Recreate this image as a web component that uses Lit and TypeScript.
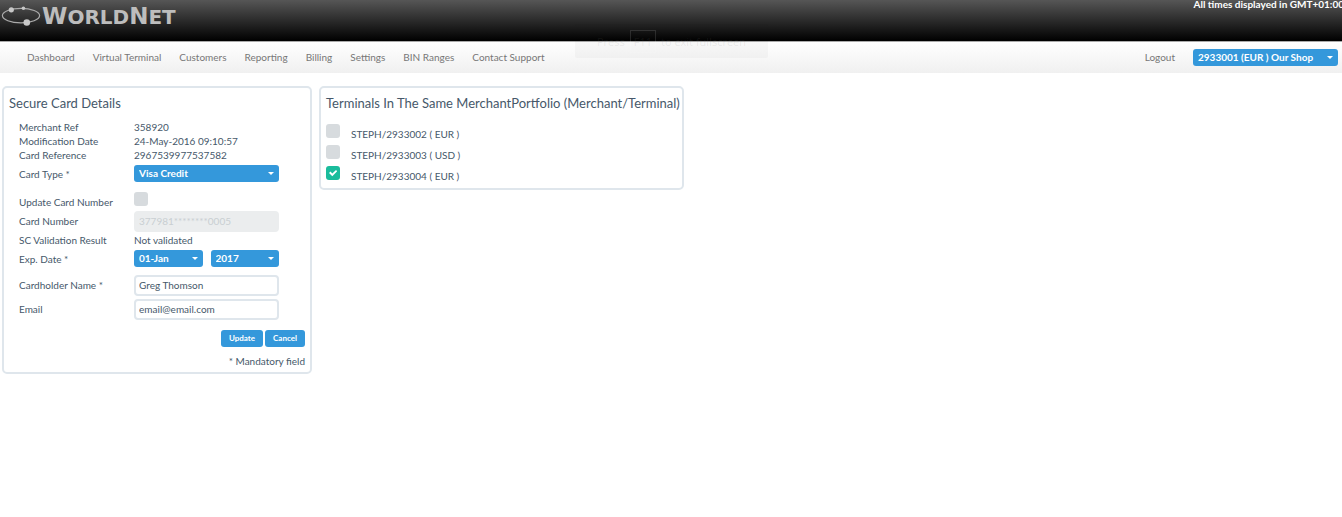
import { LitElement, html, css } from "lit";
import { customElement } from "lit/decorators.js";

const NAV = ["Dashboard", "Virtual Terminal", "Customers", "Reporting", "Billing", "Settings", "BIN Ranges", "Contact Support"];

const TERMINALS = [
  { id: "t2933002", label: "STEPH/2933002 ( EUR )", on: false },
  { id: "t2933003", label: "STEPH/2933003 ( USD )", on: false },
  { id: "t2933004", label: "STEPH/2933004 ( EUR )", on: true },
];

@customElement("app-root")
export class AppRoot extends LitElement {
  static styles = css`
    :host {
      display: block;
      position: relative;
      min-height: 100vh;
      overflow: hidden;
      background: #fff;
      color: #46586a;
      font: 10px/14px Lato, "Open Sans", sans-serif;
    }
    * { box-sizing: border-box; }
    .top {
      display: flex;
      justify-content: space-between;
      align-items: flex-start;
      height: 41px;
      background: linear-gradient(#565656, #000);
    }
    .brand { display: flex; align-items: center; height: 32px; color: #bdbdbd; }
    .orbit { width: 42px; height: 24px; flex: none; }
    .word { font: bold 20px/24px "DejaVu Sans", sans-serif; }
    .cap { font-size: 23px; }
    .zone { margin-right: -2px; line-height: 8px; font-weight: bold; color: #fff; white-space: nowrap; }
    .nav {
      display: flex;
      align-items: center;
      gap: 18px;
      height: 32px;
      padding: 0 4px 1px 27px;
      border-top: 1px solid #aaa;
      background: linear-gradient(#fff, #f0f0f0);
    }
    .nav a { color: #777; text-decoration: none; white-space: nowrap; }
    .logout { margin-left: auto; }
    .main { display: flex; align-items: flex-start; gap: 7px; padding: 13px 2px; }
    .card { border: 2px solid #dfe6ec; border-radius: 5px; }
    .details { width: 310px; padding: 7px 5px 4px; }
    .terminals { padding: 7px 2px 5px 5px; }
    h2 { margin: 0; font-size: 13px; line-height: 16px; font-weight: normal; white-space: nowrap; }
    .fields {
      display: grid;
      grid-template-columns: 115px 145px;
      padding: 9px 0 0 10px;
      align-items: center;
    }
    .cell { display: flex; align-items: center; gap: 8px; }
    .h20 { height: 20px; }
    .h24 { height: 24px; }
    .h28 { height: 28px; }
    .low { align-self: end; }
    .pick { align-items: flex-start; padding-top: 3px; }
    .check { height: 23px; align-items: flex-end; padding-bottom: 3px; }
    .select { position: relative; display: block; flex: 1; }
    .select::after {
      content: "";
      position: absolute;
      right: 5px;
      top: 7px;
      border: 3px solid transparent;
      border-top-color: #fff;
      border-bottom-width: 0;
      pointer-events: none;
    }
    select {
      appearance: none;
      display: block;
      width: 100%;
      height: 17px;
      padding: 0 16px 0 5px;
      border: 0;
      border-radius: 3px;
      background: #3498db;
      color: #fff;
      font: bold 10px/17px Lato, sans-serif;
    }
    .shop { flex: none; width: 145px; }
    .text {
      width: 100%;
      height: 21px;
      padding: 0 3px;
      border: 2px solid #dfe6ec;
      border-radius: 4px;
      background: #fff;
      color: #46586a;
      font: 10px/16px Lato, sans-serif;
    }
    .text:disabled { border-color: #ebedee; background: #ebedee; color: #c9cfd2; }
    .box {
      appearance: none;
      flex: none;
      width: 14px;
      height: 14px;
      margin: 0;
      border-radius: 3px;
      background: #d7dbde;
    }
    .box:checked { background: #1abc9c; }
    .box:checked::before {
      content: "";
      display: block;
      width: 14px;
      height: 14px;
      background: #fff;
      clip-path: polygon(3px 7px, 4.5px 5.6px, 6.3px 7.6px, 10px 4px, 11.2px 5.2px, 6.3px 10.2px);
    }
    .actions { display: flex; justify-content: flex-end; gap: 2px; padding-top: 11px; }
    button {
      height: 17px;
      padding: 0 8px;
      border: 0;
      border-radius: 3px;
      background: #3498db;
      color: #fff;
      font: bold 8px/17px Lato, sans-serif;
    }
    .note { margin: 0; padding-top: 7px; text-align: right; }
    .list { margin: 0; padding: 13px 0 0; list-style: none; }
    .item { display: flex; align-items: flex-start; gap: 11px; height: 21px; }
    .item:last-child { height: 17px; }
    .item label { padding-top: 3px; }
    .hint {
      position: absolute;
      top: 24px;
      left: 50%;
      width: 193px;
      height: 34px;
      margin-left: -96px;
      display: flex;
      align-items: center;
      justify-content: center;
      gap: 5px;
      border-radius: 2px;
      background: rgba(20, 20, 20, 0.03);
      color: rgba(128, 128, 128, 0.13);
      font: 11px/17px "Open Sans", sans-serif;
      white-space: nowrap;
      pointer-events: none;
    }
    .key { padding: 2px 3px; border: 1px solid rgba(255, 255, 255, 0.12); }
  `;

  private select(id: string, value: string, label: string, cls = "") {
    return html`<span class="select ${cls}"><select id=${id} aria-label=${label}><option>${value}</option></select></span>`;
  }

  render() {
    return html`
      <header class="top">
        <div class="brand">
          <svg class="orbit" viewBox="0 0 42 24" aria-hidden="true">
            <ellipse cx="21" cy="11.6" rx="18.6" ry="7.3" fill="none" stroke="#aaa" stroke-width="1.2" />
            <g fill="#c8c8c8"><circle cx="11.3" cy="5.8" r="2.6" /><circle cx="23.4" cy="4.2" r="1.8" /><circle cx="26.8" cy="18.5" r="3.3" /></g>
          </svg>
          <span class="word"><span class="cap">W</span>ORLD<span class="cap">N</span>ET</span>
        </div>
        <span class="zone">All times displayed in GMT+01:00</span>
      </header>
      <nav class="nav">
        ${NAV.map((n) => html`<a href="#">${n}</a>`)}
        <a class="logout" href="#">Logout</a>
        ${this.select("shop", "2933001 (EUR ) Our Shop", "Terminal", "shop")}
      </nav>
      <main class="main">
        <form class="card details">
          <h2>Secure Card Details</h2>
          <div class="fields">
            <span>Merchant Ref</span><span>358920</span>
            <span>Modification Date</span><span>24-May-2016 09:10:57</span>
            <span>Card Reference</span><span>2967539977537582</span>
            <label for="type">Card Type *</label>
            <div class="cell h24 pick">${this.select("type", "Visa Credit", "Card Type")}</div>
            <label class="low" for="upd">Update Card Number</label>
            <div class="cell check"><input class="box" id="upd" type="checkbox" /></div>
            <label for="num">Card Number</label>
            <div class="cell h24"><input class="text" id="num" value="377981********0005" disabled /></div>
            <span>SC Validation Result</span><span>Not validated</span>
            <label for="month">Exp. Date *</label>
            <div class="cell h24 pick">${this.select("month", "01-Jan", "Month")}${this.select("year", "2017", "Year")}</div>
            <label for="name">Cardholder Name *</label>
            <div class="cell h28"><input class="text" id="name" value="Greg Thomson" /></div>
            <label for="email">Email</label>
            <div class="cell h20"><input class="text" id="email" value="email@email.com" /></div>
          </div>
          <div class="actions"><button type="button">Update</button><button type="button">Cancel</button></div>
          <p class="note">* Mandatory field</p>
        </form>
        <section class="card terminals">
          <h2>Terminals In The Same MerchantPortfolio (Merchant/Terminal)</h2>
          <ul class="list">
            ${TERMINALS.map((t) => html`<li class="item">
              <input class="box" id=${t.id} type="checkbox" ?checked=${t.on} /><label for=${t.id}>${t.label}</label>
            </li>`)}
          </ul>
        </section>
      </main>
      <div class="hint"><span>Press</span><span class="key">F11</span><span>to exit fullscreen</span></div>
    `;
  }
}
